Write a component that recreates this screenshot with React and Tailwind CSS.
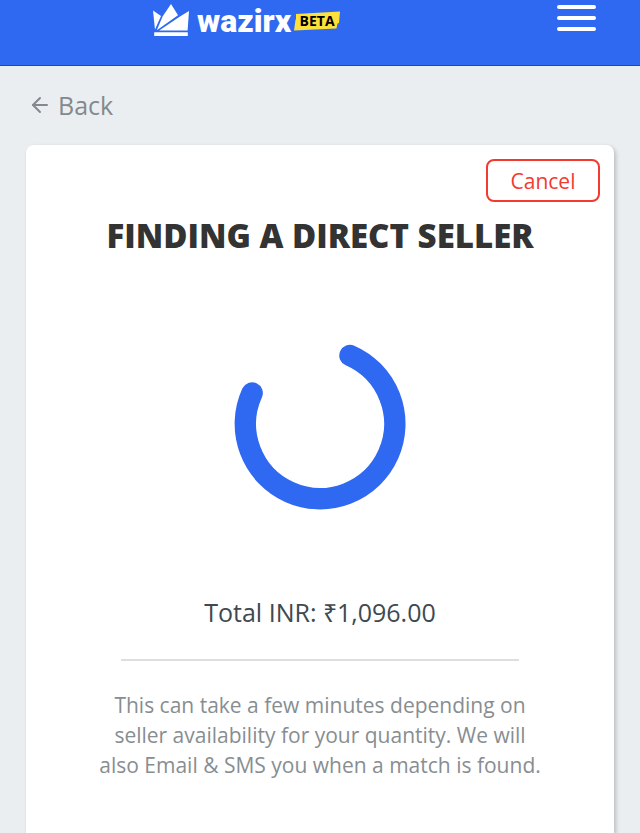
import { ArrowLeft } from "lucide-react";

function Logo() {
  return (
    <a href="#home" aria-label="WazirX beta" className="flex items-start text-white">
      <svg viewBox="0 0 36 32" fill="currentColor" className="h-8 w-9" aria-hidden="true">
        <path d="M0 6.5L8 12L2 25.5Z" />
        <path d="M18 0L25 11.2L3.8 26.2L9.6 12.5Z" />
        <path d="M36 7L34.6 26.6H6.2L26.6 12.8Z" />
        <path d="M1.2 28.2H34.8V32H1.2Z" />
      </svg>
      <span className="ml-2 font-[Roboto,sans-serif] text-[32px] leading-[34px] font-black">wazirx</span>
      <span className="relative mt-[7px] ml-[3px] flex h-5 w-[46px] items-center justify-center text-sm leading-5 font-bold text-black">
        <svg viewBox="0 0 46 20" className="absolute inset-0 h-5 w-[46px]" aria-hidden="true">
          <path d="M2 3L46 0.5L45 12L43.5 12.5L42.5 17.5L0 19.5L1.5 9L2 8Z" fill="#fde03a" />
        </svg>
        <span className="relative">BETA</span>
      </span>
    </a>
  );
}

function Header() {
  return (
    <header className="border-b border-[#1d47b0] bg-[#2f69f1]">
      <div className="flex h-[65px] items-start justify-between pr-11 pl-[153px]">
        <div className="pt-1">
          <Logo />
        </div>
        <button type="button" aria-label="Open menu" className="flex w-[39px] flex-col gap-[7px] pt-[5px]">
          <span className="h-1 w-full rounded-full bg-white" />
          <span className="h-1 w-full rounded-full bg-white" />
          <span className="h-1 w-full rounded-full bg-white" />
        </button>
      </div>
    </header>
  );
}

function Spinner() {
  return (
    <svg viewBox="0 0 172 172" fill="none" className="size-[172px]" role="img" aria-label="Searching">
      <path
        d="M116 17.5A74.7 74.7 0 1 1 18.1 55"
        stroke="#2f69f1"
        strokeWidth="21.5"
        strokeLinecap="round"
      />
    </svg>
  );
}

export default function App() {
  return (
    <div className="flex min-h-screen flex-col bg-[#eaeef1] font-['Open_Sans',sans-serif]">
      <Header />

      <main className="flex flex-1 flex-col px-[26px] pt-[21px]">
        <a href="#back" className="flex items-center gap-[6px] self-start pl-[2px] text-[25px] leading-9 text-[#838a8d]">
          <ArrowLeft size={24} strokeWidth={2} />
          Back
        </a>

        <section className="mt-[22px] flex flex-1 flex-col rounded-t-lg bg-white px-[14px] pt-[14px] shadow-[2px_2px_4px_rgba(0,0,0,0.2)]">
          <button
            type="button"
            className="h-[43px] w-[114px] self-end rounded-lg border-2 border-[#f4392f] text-[21px] leading-8 text-[#f4392f]"
          >
            Cancel
          </button>

          <div className="flex flex-col items-center text-center">
            <h1 className="mt-3 text-[33px] leading-[44px] font-extrabold text-[#333333]">
              FINDING A DIRECT SELLER
            </h1>
            <div className="mt-20">
              <Spinner />
            </div>
            <p className="mt-[84px] text-[25px] leading-9 text-[#3e4a50]">Total INR: ₹1,096.00</p>
            <hr className="mt-[29px] w-[398px] max-w-full border-t-2 border-[#dedede]" />
            <p className="mt-[29px] max-w-[452px] text-[21px] leading-[30px] text-[#878e91]">
              This can take a few minutes depending on seller availability for your quantity. We will
              also Email &amp; SMS you when a match is found.
            </p>
          </div>
        </section>
      </main>
    </div>
  );
}
